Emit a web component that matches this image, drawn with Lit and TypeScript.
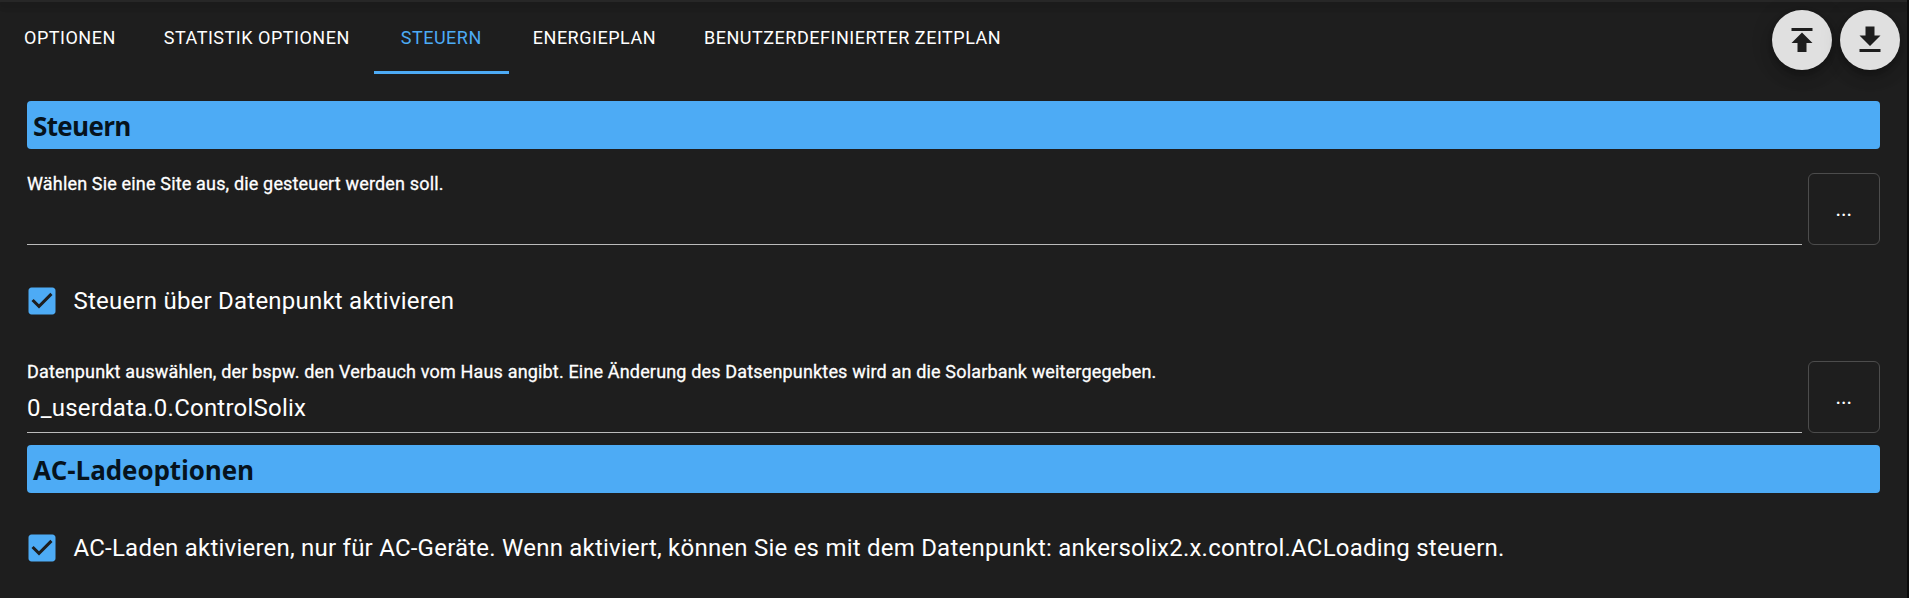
import { LitElement, html, css, svg } from "lit";
import { customElement, property } from "lit/decorators.js";
import { classMap } from "lit/directives/class-map.js";

const TABS = ["Optionen", "Statistik Optionen", "Steuern", "Energieplan", "Benutzerdefinierter Zeitplan"];

const ICON_UPLOAD = svg`<path d="M5 4v2h14V4H5zm0 10h4v6h6v-6h4l-7-7-7 7z" />`;
const ICON_DOWNLOAD = svg`<path d="M19 9h-4V3H9v6H5l7 7 7-7zM5 18v2h14v-2H5z" />`;

@customElement("section-header")
class SectionHeader extends LitElement {
  static styles = css`
    :host {
      display: block;
    }
    .bar {
      box-sizing: border-box;
      height: 48px;
      padding: 1px 6px 0;
      border-radius: 4px;
      background: #4dabf5;
      color: #06131d;
      font: 700 26px/48px "Open Sans", "Noto Sans", sans-serif;
    }
  `;
  render() {
    return html`<div class="bar"><slot></slot></div>`;
  }
}

@customElement("id-field")
class IdField extends LitElement {
  @property() label = "";
  @property() value = "";
  static styles = css`
    :host {
      display: flex;
      gap: 6px;
      height: 72px;
    }
    .field {
      flex: 1;
      display: flex;
      flex-direction: column;
      box-sizing: border-box;
      border-bottom: 1px solid #bbbbbb;
    }
    .label {
      font-size: 18px;
      line-height: 22px;
      letter-spacing: 0.165px;
      -webkit-text-stroke: 0.3px #fff;
    }
    .value {
      margin-top: 8px;
      font-size: 24px;
      line-height: 34px;
      letter-spacing: 0.225px;
    }
    .pick {
      box-sizing: border-box;
      width: 72px;
      height: 72px;
      padding: 1px 0 0;
      border: 1px solid #4c4c4c;
      border-radius: 6px;
      background: none;
      color: #fff;
      font: 500 18px/30px Roboto, sans-serif;
      letter-spacing: 0.5px;
    }
  `;
  render() {
    return html`
      <div class="field">
        <div class="label">${this.label}</div>
        <div class="value">${this.value}</div>
      </div>
      <button class="pick">...</button>
    `;
  }
}

@customElement("check-row")
class CheckRow extends LitElement {
  static styles = css`
    :host {
      display: flex;
      align-items: center;
      gap: 13.5px;
      height: 36px;
      padding-left: 24px;
      font-size: 24px;
      line-height: 36px;
      letter-spacing: 0.225px;
    }
    .box {
      flex: none;
      width: 36px;
      height: 36px;
      fill: #4dabf5;
    }
  `;
  render() {
    return html`
      <svg class="box" viewBox="0 0 24 24">
        <path
          d="M19 3H5c-1.11 0-2 .9-2 2v14c0 1.1.89 2 2 2h14c1.11 0 2-.9 2-2V5c0-1.1-.89-2-2-2zm-9 14l-5-5 1.41-1.41L10 14.17l7.59-7.59L19 8l-9 9z"
        />
      </svg>
      <span><slot></slot></span>
    `;
  }
}

@customElement("app-root")
class AppRoot extends LitElement {
  static styles = css`
    :host {
      display: block;
      box-sizing: border-box;
      height: 598px;
      overflow: hidden;
      border-right: 2px solid #0b0b0b;
      background: #1e1e1e;
      color: #fff;
      font-family: Roboto, sans-serif;
    }
    .appbar {
      height: 2px;
      background: #272727;
      box-shadow: 0 3px 6px rgba(0, 0, 0, 0.28), 0 2px 12px rgba(0, 0, 0, 0.12);
    }
    .top {
      display: flex;
      justify-content: space-between;
      height: 72px;
    }
    .tabs {
      display: flex;
    }
    .tab {
      box-sizing: border-box;
      height: 72px;
      min-width: 135px;
      padding: 20px 24px 17px;
      border: 0;
      border-bottom: 3px solid transparent;
      background: none;
      color: #fff;
      font: 400 18px/32px Roboto, sans-serif;
      letter-spacing: 0.514px;
      text-transform: uppercase;
      text-align: center;
      white-space: nowrap;
    }
    .tab.active {
      color: #4dabf5;
      border-bottom-color: #4dabf5;
    }
    .actions {
      display: flex;
      gap: 8px;
      padding: 8px 7px 0 0;
    }
    .fab {
      display: grid;
      place-items: center;
      width: 60px;
      height: 60px;
      padding: 0;
      border: 0;
      border-radius: 50%;
      background: #e0e0e0;
      box-shadow: 0 4px 7px -1px rgba(0, 0, 0, 0.2), 0 8px 14px rgba(0, 0, 0, 0.14), 0 2px 24px rgba(0, 0, 0, 0.12);
    }
    .fab svg {
      width: 36px;
      height: 36px;
      fill: #1e1e1e;
    }
    .content {
      display: flex;
      flex-direction: column;
      padding: 27px 27px 0;
    }
    .main {
      letter-spacing: -0.65px;
    }
    .site {
      margin-top: 24px;
    }
    .check {
      margin: 38px 0 42px -27px;
    }
    .ac {
      margin-top: 12px;
      letter-spacing: -0.1px;
    }
    .ac + .check {
      margin-top: 37px;
    }
  `;
  render() {
    return html`
      <div class="appbar"></div>
      <div class="top">
        <nav class="tabs">
          ${TABS.map((t) => html`<button class=${classMap({ tab: true, active: t === "Steuern" })}>${t}</button>`)}
        </nav>
        <div class="actions">
          <button class="fab"><svg viewBox="0 0 24 24">${ICON_UPLOAD}</svg></button>
          <button class="fab"><svg viewBox="0 0 24 24">${ICON_DOWNLOAD}</svg></button>
        </div>
      </div>
      <main class="content">
        <section-header class="main">Steuern</section-header>
        <id-field class="site" label="Wählen Sie eine Site aus, die gesteuert werden soll."></id-field>
        <check-row class="check">Steuern über Datenpunkt aktivieren</check-row>
        <id-field
          label="Datenpunkt auswählen, der bspw. den Verbauch vom Haus angibt. Eine Änderung des Datsenpunktes wird an die Solarbank weitergegeben."
          value="0_userdata.0.ControlSolix"
        ></id-field>
        <section-header class="ac">AC-Ladeoptionen</section-header>
        <check-row class="check"
          >AC-Laden aktivieren, nur für AC-Geräte. Wenn aktiviert, können Sie es mit dem Datenpunkt:
          ankersolix2.x.control.ACLoading steuern.</check-row
        >
      </main>
    `;
  }
}
